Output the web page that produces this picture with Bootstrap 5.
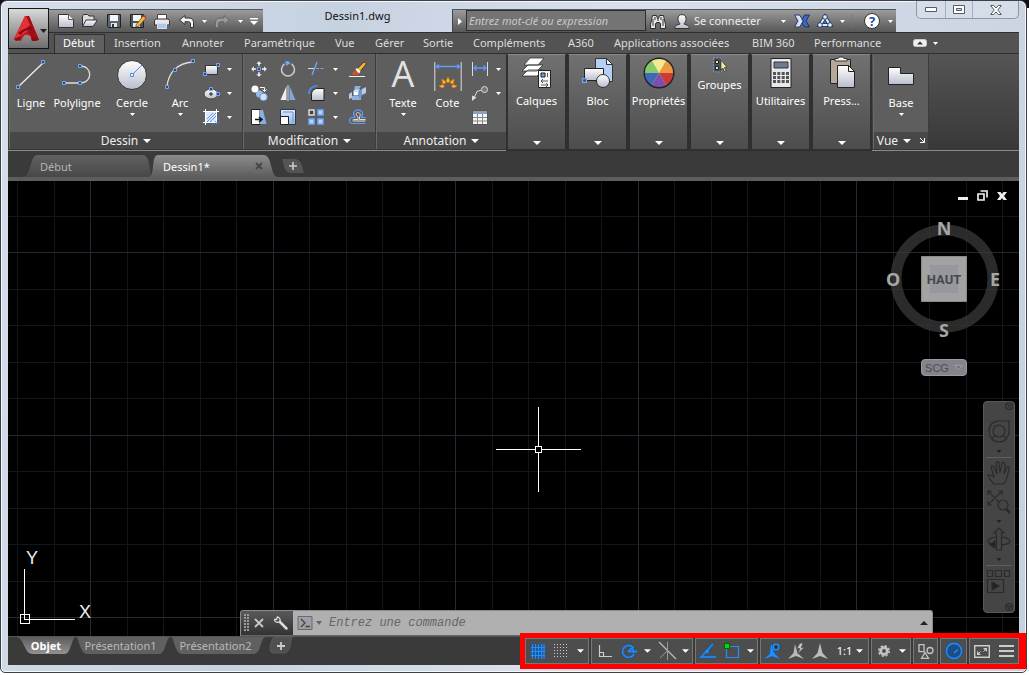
<!DOCTYPE html>
<html lang="fr">
<head>
<meta charset="utf-8">
<meta name="viewport" content="width=device-width, initial-scale=1">
<title>Dessin1.dwg</title>
<link rel="stylesheet" href="https://cdn.jsdelivr.net/npm/bootstrap@5.3.0/dist/css/bootstrap.min.css">
<style>
body{font:12px/16px "Noto Sans","Open Sans",sans-serif;background:#fff;color:#eee;overflow:hidden}
button,input,a{font:inherit;color:inherit;text-decoration:none}
button{background:none;border:0;padding:0;display:flex;align-items:center;justify-content:center;white-space:nowrap}
svg{display:block;flex:none;overflow:visible}
.desk{height:100vh;padding:0 2px 2px 0;background:linear-gradient(#111 8px,#fff 8px)}
.win{height:100%;border:1px solid #3c4148;border-radius:7px 7px 5px 5px;background:linear-gradient(100deg,#d5deea,#c7d2e1 30%,#d8e0ec 55%,#c6d1e0);padding:0 7px 7px;box-shadow:inset 0 0 0 1px #f4f7fb}
.ui{font-size:11px}
/* title bar */
.titlebar{height:31px;padding-left:41px}
.appbtn{left:0;top:7px;width:41px;height:41px;background:linear-gradient(#d9d9d9,#a8a8a8 45%,#6e6e6e);border:1px solid #151515;z-index:3}
.qat,.info{height:23px;background:linear-gradient(#9b9b9b,#6a6a6a 70%,#585858);border-top:1px solid #555;display:grid}
.qat{grid-template-columns:repeat(6,24px) 12px 24px 12px 16px;padding:0 0 0 5px;width:214px}
.info{grid-template-columns:13px 180px 24px 24px 82px 14px 24px 22px 12px 12px 24px 12px;width:444px;border-left:1px solid #444}
.doctitle{color:#111;padding-bottom:1px}
.searchbox{background:#747474;border:1px solid #2e2e2e;padding:0 2px;height:21px;width:100%;font-style:italic;border-radius:0}
.searchbox::placeholder,.cmdinput::placeholder{color:inherit;opacity:1}
.searchbox{color:#c8c8c8}
.sysbtns{margin-left:20px;width:103px;height:18px;border:1px solid #8d97a6;border-top:0;border-radius:0 0 5px 5px;display:grid;grid-template-columns:28px 27px 1fr;background:#d5dde8}
.sysbtns button+button{border-left:1px solid #a5aebb}
/* ribbon */
.rtabs{height:21px;background:#535353;border-top:1px solid #2f2f2f;display:grid;padding-left:46px;grid-template-columns:51px 68px 62px 91px 40px 48px 50px 95px 46px 138px 62px 105px 20px 10px;justify-content:start}
.rtabs a{padding-left:9px;line-height:19px;white-space:nowrap;color:#ddd}
.rtabs a.on{background:#606060;border:1px solid #2f2f2f;border-bottom:0;padding-left:8px;line-height:16px;margin-top:1px;color:#fff}
.panels{height:98px;background:linear-gradient(#555,#383838);border-top:1px solid #2f2f2f;border-bottom:1px solid #8a8a8a;padding:0 0 0 1px}
.pan{background:#5e5e5e;border-right:1px solid #3c3c3c;border-left:1px solid #696969;height:95px}
.pbody{height:78px}
.ptitle{height:17px;line-height:17px;background:#474747;font-size:12px;gap:5px}
.pd{width:234px}.pm{width:133px}.pa{width:131px}.pv{width:56px}
.slim{width:59px;margin-right:2px;height:96px;background:linear-gradient(#717171,#4d4d4d);border:1px solid #303030;border-top-color:#888;flex-direction:column;justify-content:flex-start;padding-top:2px;color:#fff;outline:1px solid #303030}
.slim .dn{margin-top:auto;margin-bottom:4px}
.tool{flex-direction:column;justify-content:flex-start;padding-top:5px;color:#fff}
.tool span,.slim span{line-height:16px}
.tool span{margin-top:4px}
.tool .dn{margin-top:2px}
.gd{display:grid;grid-template-columns:42px 50px 60px 36px 1fr}
.small-grid{display:grid;grid-auto-rows:24px;padding-top:3px;align-content:start}
.s2{grid-template-columns:26px 10px}
.s4{grid-template-columns:28px 29px 28px 10px 1fr;padding-left:1px}
.ga{display:grid;grid-template-columns:52px 37px 28px 8px}
/* drawing tabs */
.ftabs{height:30px;background:#3a3a3a;border-bottom:4px solid #5d5d5d;padding:4px 0 0 15px}
.ftab{height:22px;padding:0 17px;line-height:23px;position:relative;margin-right:-5px}
.ftab>svg.bg,.ltab>svg.bg{position:absolute;inset:0;width:100%;height:100%;z-index:0}
.ftab>*,.ltab>*{position:relative;z-index:1}
.ft1{width:130px;color:#b5b5b5}.ft2{width:130px;color:#fff;padding:0 15px}
/* canvas */
.canvas{background:#000;min-height:0}
.canvas>.full{position:absolute;inset:0;width:100%;height:100%}
.mdi{right:12px;top:9px;gap:9px}
.cube{right:15px;top:35px}
.scg{right:52px;top:178px;width:46px;height:17px;background:#84848c;border:1px solid #9a9aa2;border-radius:4px;color:#4c4c52;font:11px/14px "Liberation Sans",sans-serif;gap:5px}
.navbar2{right:4px;top:220px;width:32px;height:212px;background:#454545;border:1px solid #595959;border-radius:4px}
.ucs{left:9px;bottom:7px}
.cmd{left:232px;right:86px;bottom:0;height:26px;border-radius:3px 3px 0 0;background:#b0b0b0;border:1px solid #8b8b8b;border-bottom-color:#666}
.cmdleft{width:52px;background:linear-gradient(#595959,#333);display:grid;grid-template-columns:8px 20px 24px}
.cmdinput{border:0;background:none;font:italic 12px/16px "Liberation Mono",monospace;color:#666;padding:0 2px;outline:0;min-width:0}
/* status bar */
.foot{height:29px;background:#3a3a3a;border-top:1px solid #555}
.ltabs{padding-left:8px}
.ltab{height:17px;position:relative;margin-right:-6px;color:#b9b9b9;justify-content:center;line-height:17px}
.l1{width:60px;color:#fff;font-weight:700}.l2{width:101px}.l3{width:101px}.l4{width:26px}
.stat{gap:2px;margin-top:1px;height:26px}
.hl{position:absolute;inset:-5px -7px -5px -5px;border:5px solid #f00;border-right-width:7px;pointer-events:none}
.grp{display:grid;border:1px solid #777;background:#4d4d4d;height:26px}
.g1{grid-template-columns:24px 22px 16px}.g2{grid-template-columns:25px 23px 15px 24px 13px}.g3{grid-template-columns:23px 25px 13px}
.g4{grid-template-columns:23px 24px 24px 36px}.g5{grid-template-columns:23px 15px}.g6{grid-template-columns:23px}.g7{grid-template-columns:25px}.g8{grid-template-columns:24px 24px}
</style>
</head>
<body>
<svg width="0" height="0" class="position-absolute" aria-hidden="true">
<defs>
<linearGradient id="wg" x1="0" y1="0" x2="0" y2="1"><stop offset="0" stop-color="#fff"/><stop offset="1" stop-color="#b9bdcc"/></linearGradient>
<linearGradient id="bg1" x1="0" y1="0" x2="0" y2="1"><stop offset="0" stop-color="#e4efff"/><stop offset="1" stop-color="#8db4e4"/></linearGradient>
<linearGradient id="tg" x1="0" y1="0" x2="0" y2="1"><stop offset="0" stop-color="#616161"/><stop offset="1" stop-color="#484848"/></linearGradient>
<linearGradient id="ta" x1="0" y1="0" x2="0" y2="1"><stop offset="0" stop-color="#8c8c8c"/><stop offset="1" stop-color="#5d5d5d"/></linearGradient>
<linearGradient id="tb" x1="0" y1="0" x2="0" y2="1"><stop offset="0" stop-color="#5d5d5d"/><stop offset="1" stop-color="#929292"/></linearGradient>
<filter id="glow" x="-40%" y="-40%" width="180%" height="180%"><feDropShadow dx="0" dy="0" stdDeviation="1" flood-color="#0a5cd0"/></filter>
<symbol id="c5" viewBox="0 0 5 3"><path d="M0 0h5L2.500 3z" fill="#fff"/></symbol>
<symbol id="c8" viewBox="0 0 8 4"><path d="M0 0h8L4 4z" fill="#fff"/></symbol>
<symbol id="gp" viewBox="0 0 4 4"><path d="M.5.5h3v3h-3z" fill="#444" stroke="#6ea8ff"/></symbol>
</defs>
</svg>
<div class="desk">
<div class="win d-flex flex-column ui">

<header class="titlebar d-flex align-items-end position-relative">
  <button class="appbtn position-absolute" aria-label="Menu de l'application">
    <svg width="36" height="34" viewBox="0 0 36 34"><path d="M3 27 14 4h4l10 24-7 1-1-4c-3-3-6-3-8 0l-2 4z" fill="#c5161d"/><path d="M14 4h4l10 24-7 1-1-5-7-8z" fill="#a30f15"/><path d="M14 4 3 27l4-1 11-8 2-3-5-11z" fill="#e2313a"/><path d="M7 21c6-5 9-4 12-8l2 5c-5 0-8 0-11 5z" fill="#860a10"/><path d="M3 27l7-3-1 4-4 1zM28 27l-8-3 1 5 4 0z" fill="#8c0d12"/><path d="M29 17h7l-3.500 4z" fill="#222"/></svg>
  </button>
  <div class="qat">
    <button aria-label="Nouveau"><svg width="16" height="14" viewBox="0 0 16 14"><path d="M.5.5h10l5 5v8H.5z" fill="url(#wg)" stroke="#333"/><path d="M10.500.5v5h5" fill="#eee" stroke="#555"/></svg></button>
    <button aria-label="Ouvrir"><svg width="16" height="14" viewBox="0 0 16 14"><path d="M.5 12.500V2l1-1.500h4L7 2h5v3" fill="#ddd" stroke="#333"/><path d="M.5 12.500 4 6h11.500L11 12.500z" fill="url(#wg)" stroke="#333"/></svg></button>
    <button aria-label="Enregistrer"><svg width="14" height="14" viewBox="0 0 14 14"><path d="M.5.5h13v13h-12l-1-1z" fill="#5b6470" stroke="#222"/><path d="M3 1h8v6H3z" fill="#f2f5fa"/><path d="M4 9h6v4H4z" fill="#dfe5ee"/><path d="M5 10h2v3H5z" fill="#333"/></svg></button>
    <button aria-label="Enregistrer sous"><svg width="16" height="14" viewBox="0 0 16 14"><path d="M.5.5h13v13h-12l-1-1z" fill="#4c535d" stroke="#222"/><path d="M3 1h8v6H3z" fill="#f2f5fa"/><path d="M3 9h7v4H3z" fill="#dfe5ee"/><path d="M6 11 13 2l3 2-7 8-3 1z" fill="#f2b63c" stroke="#6b4510" stroke-width=".7"/><path d="m13 2 1-1 2 1v2z" fill="#d33"/></svg></button>
    <button aria-label="Imprimer"><svg width="16" height="15" viewBox="0 0 16 15"><path d="M3.500.5h9V6h-9z" fill="#fff" stroke="#444"/><path d="M.5 6.500 2 5h12l1.500 1.500V11H.5z" fill="#e8e8ec" stroke="#333"/><path d="M3.500 9.500h9v5h-9z" fill="#a9c9ee" stroke="#ddd"/></svg></button>
    <button aria-label="Annuler"><svg width="15" height="13" viewBox="0 0 15 13"><path d="M.5 5 6 .5V3h4c3 0 4.500 2 4.500 4.500v5h-3V9c0-1.500-.8-2.300-2-2.300H6V9.500z" fill="#f0f2f5" stroke="#333"/></svg></button>
    <button aria-label="Liste annuler"><svg width="5" height="3"><use href="#c5"/></svg></button>
    <button aria-label="Rétablir"><svg width="15" height="13" viewBox="0 0 15 13"><path d="M14.500 5 9 .5V3H5C2 3 .5 5 .5 7.500v5h3V9c0-1.500.8-2.300 2-2.300H9V9.500z" fill="#999" stroke="#666"/></svg></button>
    <button aria-label="Liste rétablir"><svg width="5" height="3"><use href="#c5"/></svg></button>
    <button aria-label="Personnaliser"><svg width="8" height="7" viewBox="0 0 8 7"><path d="M0 0h8v1.500H0zM0 3h8L4 7z" fill="#fff"/></svg></button>
  </div>
  <div class="doctitle flex-grow-1 text-center align-self-center">Dessin1.dwg</div>
  <div class="info">
    <button aria-label="Réduire"><svg width="4" height="7" viewBox="0 0 4 7"><path d="M0 0l4 3.500L0 7z" fill="#fff"/></svg></button>
    <input class="searchbox" aria-label="Recherche" placeholder="Entrez mot-clé ou expression">
    <button aria-label="Rechercher"><svg width="16" height="15" viewBox="0 0 16 15"><path d="M2.500 1.500h4l1 3h1l1-3h4l2 9v4h-5v-5h-1v-1h-3v1h-1v5h-5v-4z" fill="#e4e6ea" stroke="#2c2c2c"/><path d="M3 5v7M5 3v3M11 3v3M13 5v7M7 6h2" stroke="#333"/></svg></button>
    <button aria-label="Compte"><svg width="16" height="15" viewBox="0 0 16 15"><path d="M.7 14.500c0-3 2-3.500 5-4.300v-1C4 8 4 6 4 4.500 4 2 5.500.6 8 .6S12 2 12 4.500C12 6 12 8 10.300 9.200v1c3 .8 5 1.300 5 4.300z" fill="url(#wg)" stroke="#333"/></svg></button>
    <button class="justify-content-start">Se connecter</button>
    <button aria-label="Options du compte"><svg width="5" height="3"><use href="#c5"/></svg></button>
    <button aria-label="Exchange"><svg width="16" height="14" viewBox="0 0 16 14"><path d="M.5 1h5l4 6-4 6h-5l3.500-6z" fill="#d8e2f2" stroke="#233a6a"/><path d="M15.500 1h-5L8 5.500 9.500 7 8 9l2.500 4h5L12 7z" fill="#3c69c0" stroke="#1c3468"/></svg></button>
    <button aria-label="A360"><svg width="16" height="14" viewBox="0 0 16 14"><path d="M8 3 3 11h10z" fill="none" stroke="#223f75" stroke-width="4"/><path d="M8 3 3 11h10z" fill="none" stroke="#e6ecf5" stroke-width="2"/><g fill="#e6ecf5" stroke="#223f75"><circle cx="8" cy="3" r="2.300"/><circle cx="3" cy="11" r="2.300"/><circle cx="13" cy="11" r="2.300"/></g></svg></button>
    <button aria-label="Options A360"><svg width="5" height="3"><use href="#c5"/></svg></button>
    <span class="border-end border-secondary opacity-75 me-2 my-1"></span>
    <button aria-label="Aide"><svg width="16" height="16" viewBox="0 0 16 16"><circle cx="8" cy="8" r="7.500" fill="#fff" stroke="#333"/><text x="8" y="12.500" text-anchor="middle" font-size="13" font-weight="700" fill="#1f49ae">?</text></svg></button>
    <button aria-label="Options d'aide"><svg width="5" height="3"><use href="#c5"/></svg></button>
  </div>
  <div class="sysbtns align-self-start">
    <button aria-label="Réduire la fenêtre"><svg width="12" height="5" viewBox="0 0 12 5"><path d="M.5.5h11v4H.5z" fill="#fff" stroke="#555b68"/></svg></button>
    <button aria-label="Agrandir"><svg width="12" height="9" viewBox="0 0 12 9"><path d="M.5.5h11v8H.5zM3.500 3.500h5v2h-5z" fill="#fff" stroke="#555b68" fill-rule="evenodd"/></svg></button>
    <button aria-label="Fermer"><svg width="12" height="10" viewBox="0 0 12 10"><path d="M.7.5h3L6 3 8.300.5h3L7.800 5l3.500 4.500h-3L6 7 3.700 9.500h-3L4.200 5z" fill="#fff" stroke="#555b68"/></svg></button>
  </div>
</header>

<nav class="rtabs">
  <a href="#" class="on">Début</a><a href="#">Insertion</a><a href="#">Annoter</a><a href="#">Paramétrique</a><a href="#">Vue</a><a href="#">Gérer</a><a href="#">Sortie</a><a href="#">Compléments</a><a href="#">A360</a><a href="#">Applications associées</a><a href="#">BIM 360</a><a href="#">Performance</a>
  <button aria-label="Réduire le ruban"><svg width="14" height="8" viewBox="0 0 14 8"><rect x=".5" y=".5" width="13" height="7" rx="2" fill="#eee" stroke="#ccc"/><path d="M4 5.500h6l-3-3z" fill="#333"/></svg></button>
  <button aria-label="Options du ruban"><svg width="5" height="3"><use href="#c5"/></svg></button>
</nav>

<section class="panels d-flex">
  <div class="pan pd">
    <div class="pbody gd">
      <button class="tool"><svg width="32" height="32" viewBox="0 0 32 32"><path d="M3 28 28 4" stroke="#eee" stroke-width="1.300"/><use href="#gp" x="1" y="26" width="4" height="4"/><use href="#gp" x="26" y="1" width="4" height="4"/></svg><span>Ligne</span></button>
      <button class="tool"><svg width="32" height="32" viewBox="0 0 32 32"><path d="M3 24h16c13 0 13-17 0-17" fill="none" stroke="#ddd" stroke-width="1.300"/><use href="#gp" x="1" y="22" width="4" height="4"/><use href="#gp" x="17" y="22" width="4" height="4"/><use href="#gp" x="17" y="5" width="4" height="4"/></svg><span>Polyligne</span></button>
      <button class="tool"><svg width="32" height="32" viewBox="0 0 32 32"><circle cx="16" cy="16" r="14.500" fill="url(#wg)" stroke="#333"/><path d="M16 16 26 6" stroke="#4a8af0"/><path d="M14.500 14.500h3v3h-3z" fill="#fff" stroke="#4a8af0"/></svg><span>Cercle</span><svg class="dn" width="5" height="3"><use href="#c5"/></svg></button>
      <button class="tool"><svg width="32" height="32" viewBox="0 0 32 32"><path d="M3 28C4 14 13 4 29 3" fill="none" stroke="#ddd" stroke-width="1.300"/><use href="#gp" x="1" y="26" width="4" height="4"/><use href="#gp" x="9" y="9" width="4" height="4"/><use href="#gp" x="27" y="0" width="4" height="4"/></svg><span>Arc</span><svg class="dn" width="5" height="3"><use href="#c5"/></svg></button>
      <div class="small-grid s2">
        <button aria-label="Rectangle"><svg width="17" height="13" viewBox="0 0 17 13"><path d="M2.500 2.500h12v9h-12z" fill="url(#wg)" stroke="#333"/><use href="#gp" x="0" y="9" width="4" height="4"/><use href="#gp" x="13" y="0" width="4" height="4"/></svg></button><button aria-label="Options rectangle"><svg width="5" height="3"><use href="#c5"/></svg></button>
        <button aria-label="Ellipse"><svg width="17" height="13" viewBox="0 0 17 13"><ellipse cx="8" cy="7" rx="7" ry="5" fill="url(#wg)" stroke="#444"/><path d="M6 7h4M8 5v4" stroke="#222"/><use href="#gp" x="6" y="0" width="4" height="4"/><use href="#gp" x="13" y="5" width="4" height="4"/></svg></button><button aria-label="Options ellipse"><svg width="5" height="3"><use href="#c5"/></svg></button>
        <button aria-label="Hachures"><svg width="17" height="17" viewBox="0 0 17 17"><path d="M3 3h11v11H3z" fill="#dbe8fc"/><path d="M4 10l6-6M4 13l9-9M7 13l6-6M8 17l9-9M12 17l5-5" stroke="#3f7fe8" stroke-width=".8"/><path d="M0 2.500h16M2.500 0v16M13.500 0v12M0 13.500h12" stroke="#fff"/></svg></button><button aria-label="Options hachures"><svg width="5" height="3"><use href="#c5"/></svg></button>
      </div>
    </div>
    <div class="ptitle d-flex align-items-center justify-content-center">Dessin <svg width="8" height="4"><use href="#c8"/></svg></div>
  </div>
  <div class="pan pm">
    <div class="pbody small-grid s4">
      <button aria-label="Déplacer"><svg width="16" height="16" viewBox="0 0 16 16"><path d="M8 0l3 3H9v2H7V3H5zM8 16l3-3H9v-2H7v2H5zM0 8l3-3v2h2v2H3v2zM16 8l-3-3v2h-2v2h2v2z" fill="#eee" stroke="#444" stroke-width=".3"/><path d="M6.500 6.500h3v3h-3z" fill="#444" stroke="#6ea8ff"/></svg></button>
      <button aria-label="Rotation"><svg width="16" height="16" viewBox="0 0 16 16"><path d="M4.500 3A6.500 6.500 0 1 0 11.500 3" fill="none" stroke="#ccc" stroke-width="1.500"/><path d="M5 1.500c2-1 4-.5 5 1" fill="none" stroke="#5a9bff" stroke-width="1.500"/><path d="M6 0l4 2.500L6 5z" fill="#6ea8ff"/></svg></button>
      <button aria-label="Ajuster"><svg width="16" height="14" viewBox="0 0 16 14"><path d="M9 0 4 13" stroke="#6ea8ff" stroke-width="1.300"/><path d="M0 6.500h6" stroke="#ddd"/><path d="M8 6.500h8" stroke="#6ea8ff" stroke-dasharray="3 1.500"/></svg></button><button aria-label="Options ajuster"><svg width="5" height="3"><use href="#c5"/></svg></button>
      <button aria-label="Effacer"><svg width="18" height="16" viewBox="0 0 18 16"><path d="M7 9 15 1l2.500 1.500L10 12z" fill="#f3b33a" stroke="#3a2610" stroke-width=".7"/><path d="M7 9l3 3-2 2H4L3 12z" fill="#d6512a"/><path d="M6.500 8.500l3.500 4 1.500-2-3.500-3.500z" fill="#fff"/><path d="M0 15.500h16" stroke="#eee"/></svg></button>
      <button aria-label="Copier"><svg width="17" height="16" viewBox="0 0 17 16"><circle cx="4" cy="4" r="3.500" fill="#fff"/><circle cx="8.500" cy="9" r="3.500" fill="#9fbce6"/><circle cx="12.500" cy="12" r="3.800" fill="#cfe0f8" stroke="#5d8fd6"/><path d="M9 2.500h4.500V6M11.500 4.500l2 2 2-2" fill="none" stroke="#fff"/></svg></button>
      <button aria-label="Miroir"><svg width="16" height="16" viewBox="0 0 16 16"><path d="M6.500 1v14H.5z" fill="#eee"/><path d="M9.500 1v14h6z" fill="#7fa8dc"/><path d="M8 0v16" stroke="#fff" stroke-width=".8"/></svg></button>
      <button aria-label="Raccord"><svg width="17" height="16" viewBox="0 0 17 16"><path d="M3.500 15.500V10c0-4 2-6.500 6.500-6.500h6v12z" fill="url(#wg)" stroke="#222"/><path d="M.7 9C1 4 4 1 9.500.8" fill="none" stroke="#4a90ff" stroke-width="1.600"/></svg></button><button aria-label="Options raccord"><svg width="5" height="3"><use href="#c5"/></svg></button>
      <button aria-label="Décomposer"><svg width="17" height="15" viewBox="0 0 17 15"><path d="M4 5l2-2h6L10 5v5H4z" fill="url(#bg1)" stroke="#456" stroke-width=".6"/><path d="M0 8l3-2v6l-3 1zM13 3l4-2v6l-4 2z" fill="#b6cdea"/><path d="M3 10h9v4H3zM6 0h6l-2 3H5z" fill="#8fb0d8"/><path d="M10 5l3-2v7l-3 3z" fill="#6f97cc"/><path d="M5 6h4v3H5z" fill="#fff"/></svg></button>
      <button aria-label="Etirer"><svg width="16" height="16" viewBox="0 0 16 16"><path d="M.5.5H9v15H.5z" fill="#fff" stroke="#222"/><path d="M9 1h3l3.500 14H9z" fill="#86aee0"/><path d="M4 10.500h6M8 8l3 2.500L8 13" stroke="#111" fill="none" stroke-width="1.500"/></svg></button>
      <button aria-label="Echelle"><svg width="16" height="16" viewBox="0 0 16 16"><path d="M.5.5h15v15H.5z" fill="url(#bg1)" stroke="#334"/><path d="M3 3h10v10" fill="none" stroke="#5d8fd6"/><path d="M.5 7.500h8v8h-8z" fill="#fff" stroke="#222"/></svg></button>
      <button aria-label="Réseau"><svg width="16" height="16" viewBox="0 0 16 16"><path d="M1 1h5v5H1z" fill="#444" stroke="#ddd" stroke-width="1.500"/><path d="M10 1h5v5h-5zM1 10h5v5H1zM10 10h5v5h-5z" fill="#bcd6ff" stroke="#6ea8ff" stroke-width="1.500"/></svg></button><button aria-label="Options réseau"><svg width="5" height="3"><use href="#c5"/></svg></button>
      <button aria-label="Décaler"><svg width="17" height="16" viewBox="0 0 17 16"><path d="M16.500 14.500h-13c-4 0-4-6 0-6H6C3 4 5 .8 9 .8S15 4 12.500 8.500h4" fill="none" stroke="#5d9bff" stroke-width="1.200"/><path d="M16.500 12h-12c-1 0-1-1.500 0-1.500H9V8C6.500 6 7 3.500 9 3.500s3 2.500 1.500 4.500v2.500h6" fill="none" stroke="#ddd"/></svg></button>
    </div>
    <div class="ptitle d-flex align-items-center justify-content-center">Modification <svg width="8" height="4"><use href="#c8"/></svg></div>
  </div>
  <div class="pan pa">
    <div class="pbody ga">
      <button class="tool"><svg width="30" height="32" viewBox="0 0 30 32"><text x="15" y="28" font-size="36" text-anchor="middle" fill="#e2e2e2" font-family="Open Sans,sans-serif">A</text></svg><span>Texte</span><svg class="dn" width="5" height="3"><use href="#c5"/></svg></button>
      <button class="tool"><svg width="28" height="32" viewBox="0 0 28 32"><path d="M.8 3v29M27.200 3v29" stroke="#ddd"/><path d="M2 7.500h24M5 5.500l-3 2 3 2M23 5.500l3 2-3 2" fill="none" stroke="#5d9bff" stroke-width="1.400"/><path d="M14 18l2 4-2 2-2-2zM8 20l3.500 2.500v2l-3 0zM20 20l-3.500 2.500v2l3 0zM5 27l4-1.500 1.500 2L8 29zM23 27l-4-1.500-1.500 2L20 29z" fill="#ffb528" stroke="#e0761a" stroke-width=".6"/></svg><span>Cote</span></button>
      <div class="small-grid">
        <button aria-label="Linéaire"><svg width="16" height="14" viewBox="0 0 16 14"><path d="M.5 0v14M15.500 0v14" stroke="#ddd"/><path d="M2 6h12M4.500 3.500 2 6l2.500 2.500M11.500 3.500 14 6l-2.500 2.500" fill="none" stroke="#5d9bff" stroke-width="1.300"/></svg></button>
        <button aria-label="Repère"><svg width="16" height="15" viewBox="0 0 16 15"><path d="M1.500 13 5 5.500 9.500 4" fill="none" stroke="#ddd"/><path d="M0 9.500V15l4.500-3.500z" fill="#ddd"/><circle cx="12.500" cy="3.500" r="3" fill="#777" stroke="#ddd"/></svg></button>
        <button aria-label="Tableau"><svg width="16" height="15" viewBox="0 0 16 15"><path d="M.5.5h15v14H.5z" fill="#f4f4f6" stroke="#555"/><path d="M1 1h14v3H1z" fill="#8aa0bd"/><path d="M1 7.500h14M1 11h14M5.500 4v10M10.500 4v10" stroke="#888"/></svg></button>
      </div>
      <div class="small-grid">
        <button aria-label="Options cote"><svg width="5" height="3"><use href="#c5"/></svg></button>
        <button aria-label="Options repère"><svg width="5" height="3"><use href="#c5"/></svg></button>
      </div>
    </div>
    <div class="ptitle d-flex align-items-center justify-content-center">Annotation <svg width="8" height="4"><use href="#c8"/></svg></div>
  </div>
  <button class="slim"><svg width="32" height="32" viewBox="0 0 32 32"><g fill="#fff" stroke="#333" stroke-width=".8"><path d="M1 19l6-6h15l-6 6zM1 14l6-6h15l-6 6zM3 8l6-7h14l-6 7z"/></g><path d="M17.500 13.500h12v17h-12z" fill="#f4f4f7" stroke="#222"/><path d="M20 16h4v4h-4z" fill="#6a9be8" stroke="#222"/><path d="M26.500 16v4M20 24h7M22 22l-2 2 2 2M20 28h7M25 26l2 2-2 2" stroke="#333" fill="none" stroke-width=".8"/></svg><span class="mt-1">Calques</span><svg class="dn" width="8" height="4"><use href="#c8"/></svg></button>
  <button class="slim"><svg width="32" height="32" viewBox="0 0 32 32"><path d="M13.500 1.500h11l6 6v17h-17z" fill="#b5d0f5" stroke="#333"/><path d="M24.500 1.500v6h6z" fill="#e8f1ff" stroke="#333"/><path d="M2.500 11.500h19v12h-19z" fill="url(#wg)" stroke="#222"/><circle cx="21" cy="24" r="6.500" fill="url(#wg)" stroke="#333"/><use href="#gp" x="0" y="21" width="5" height="5"/></svg><span class="mt-1">Bloc</span><svg class="dn" width="8" height="4"><use href="#c8"/></svg></button>
  <button class="slim"><svg width="32" height="32" viewBox="-16 -16 32 32"><circle r="15" fill="#f1e993"/><path d="M0 0-7.500-13A15 15 0 0 0-15 0z" fill="#86c96b"/><path d="M0 0H-15A15 15 0 0 0-7.500 13z" fill="#3f68b8"/><path d="M0 0-7.500 13A15 15 0 0 0 7.500 13z" fill="#7a4fae"/><path d="M0 0 7.500 13A15 15 0 0 0 15 0z" fill="#c93b36"/><path d="M0 0H15A15 15 0 0 0 7.500-13z" fill="#eb9a3f"/><circle r="14.800" fill="none" stroke="#222" stroke-width="1.400"/></svg><span class="mt-1">Propriétés</span><svg class="dn" width="8" height="4"><use href="#c8"/></svg></button>
  <button class="slim"><svg width="16" height="16" viewBox="0 0 16 16"><path d="M1.500.8h8v14h-8z" fill="#4a4f59" stroke="#6ea8ff" stroke-dasharray="1.500 1.500"/><path d="M3.500 3.500h3v3h-3zM3.500 9.500h3v3h-3z" fill="#f0e7a0" stroke="#222"/><path d="M9 3v10l2-2 1.500 4 1.500-.5L12.500 10.500H15z" fill="#f4eaa5" stroke="#333" stroke-width=".7"/></svg><span class="mt-1">Groupes</span><svg class="dn" width="8" height="4"><use href="#c8"/></svg></button>
  <button class="slim"><svg width="22" height="32" viewBox="0 0 22 32"><path d="M1 1.500h20v29H1z" fill="#e6e8ee" stroke="#222"/><path d="M4 5h14v6H4z" fill="#6d7a90" stroke="#333"/><g fill="#555"><path d="M3 15h3v3H3zM7.300 15h3v3h-3zM11.700 15h3v3h-3zM16 15h3v3h-3zM3 19h3v3H3zM7.300 19h3v3h-3zM11.700 19h3v3h-3zM16 19h3v3h-3zM3 23h3v3H3zM7.300 23h3v3h-3zM11.700 23h3v3h-3zM16 23h3v3h-3z"/></g></svg><span class="mt-1">Utilitaires</span><svg class="dn" width="8" height="4"><use href="#c8"/></svg></button>
  <button class="slim"><svg width="28" height="32" viewBox="0 0 28 32"><path d="M2.500 2.500h20v24h-20z" fill="#b5a897" stroke="#222"/><path d="M7 4V1.500h3L11 0h4l1 1.500h3V4z" fill="#f5f5f5" stroke="#333"/><path d="M9.500 8.500h11l6 6v16h-17z" fill="url(#wg)" stroke="#222"/><path d="M20.500 8.500v6h6z" fill="#fff" stroke="#222"/></svg><span class="mt-1">Press...</span><svg class="dn" width="8" height="4"><use href="#c8"/></svg></button>
  <div class="pan pv">
    <button class="pbody tool w-100"><svg width="32" height="32" viewBox="0 0 32 32"><path d="M3.500 8.500h12v6h13v11h-25z" fill="url(#wg)" stroke="#222"/></svg><span>Base</span><svg class="dn" width="5" height="3"><use href="#c5"/></svg></button>
    <div class="ptitle d-flex align-items-center justify-content-center">Vue <svg width="8" height="4"><use href="#c8"/></svg><svg class="ms-1" width="5" height="5" viewBox="0 0 5 5"><path d="M0 0l4 4M4.500 0v4.500H0" stroke="#fff" fill="none"/></svg></div>
  </div>
</section>

<nav class="ftabs d-flex">
  <a href="#" class="ftab ft1"><svg class="bg" viewBox="0 0 130 22" preserveAspectRatio="none"><path d="M0 22c8 0 7-22 14-22h106c8 0 6 22 10 22z" fill="url(#tg)"/></svg><span>Début</span></a>
  <a href="#" class="ftab ft2 d-flex justify-content-between"><svg class="bg" viewBox="0 0 127 22" preserveAspectRatio="none"><path d="M0 22c8 0 2-22 10-22h103c9 0 6 22 14 22z" fill="url(#ta)"/></svg><span class="ms-n1">Dessin1*</span><svg class="align-self-center" width="8" height="8" viewBox="0 0 8 8"><path d="M1 1l6 6M7 1 1 7" stroke="#444" stroke-width="1.800"/></svg></a>
  <button class="ms-2" aria-label="Nouvel onglet"><svg width="24" height="14" viewBox="0 0 24 14"><path d="M1 0h12c8 0 8 8 10 14H11C3 14 3 6 1 0z" fill="#555"/><path d="M8 7h8M12 3v8" stroke="#ccc" stroke-width="1.600"/></svg></button>
</nav>

<main class="canvas position-relative flex-grow-1 overflow-hidden">
  <svg class="full" aria-hidden="true"><g transform="translate(-8 -181)" fill="none" shape-rendering="crispEdges">
    <path stroke="#14151b" d="M17.500 0v3000M54.500 0v3000M127.500 0v3000M163.500 0v3000M200.500 0v3000M236.500 0v3000M309.500 0v3000M346.500 0v3000M382.500 0v3000M419.500 0v3000M492.500 0v3000M528.500 0v3000M565.500 0v3000M601.500 0v3000M674.500 0v3000M711.500 0v3000M747.500 0v3000M784.500 0v3000M820.500 0v3000M893.500 0v3000M929.500 0v3000M966.500 0v3000M1002.500 0v3000M0 216.500h4000M0 289.500h4000M0 325.500h4000M0 362.500h4000M0 398.500h4000M0 471.500h4000M0 508.500h4000M0 544.500h4000M0 581.500h4000"/>
    <path stroke="#272835" d="M90.500 0v3000M273.500 0v3000M455.500 0v3000M638.500 0v3000M856.500 0v3000M0 252.500h4000M0 435.500h4000M0 617.500h4000"/>
    <path stroke="#fff" d="M496 449.500h39M542 449.500h39M538.500 407v39M538.500 453v39M535.500 446.500h6v6h-6z"/></g></svg>
  <div class="mdi position-absolute d-flex">
    <button aria-label="Réduire le dessin"><svg width="10" height="10" viewBox="0 0 10 10"><path d="M0 6h10v3H0z" fill="#eee"/></svg></button>
    <button aria-label="Restaurer le dessin"><svg width="11" height="11" viewBox="0 0 11 11"><path d="M1 4h6v6H1zM3.500 1h6.500v6.500" fill="none" stroke="#eee" stroke-width="1.700"/></svg></button>
    <button aria-label="Fermer le dessin"><svg width="10" height="10" viewBox="0 0 10 10"><path d="M0 1h3.500L5 3l1.500-2H10L7 5l3 4H6.500L5 7 3.500 9H0l3-4z" fill="#eee"/></svg></button>
  </div>
  <svg class="cube position-absolute" width="119" height="126" viewBox="885 216 119 126"><circle cx="944.500" cy="278.500" r="48.500" fill="none" stroke="#3a3a3a" stroke-opacity=".75" stroke-width="11"/><path d="M921.500 256.500h45v45h-45z" fill="#a2a2a2" stroke="#8a8a8a"/><path d="M930 265h28v28h-28z" fill="#97989e"/><g text-anchor="middle" font-family="Noto Sans,sans-serif" font-weight="700" fill="#a6a6a6"><text x="944" y="235" font-size="18">N</text><text x="944" y="337" font-size="18">S</text><text x="893" y="286" font-size="18">O</text><text x="995" y="286" font-size="18">E</text><text x="944" y="284" font-size="13" font-family="Liberation Sans Narrow,Roboto,sans-serif" fill="#45474c">HAUT</text></g></svg>
  <button class="scg position-absolute">SCG <svg width="9" height="5" viewBox="0 0 9 5"><path d="M.5.5h8l-4 4z" fill="#777780" stroke="#a4a4aa" stroke-width=".8"/></svg></button>
  <div class="navbar2 position-absolute"><svg width="30" height="210" viewBox="984 402 30 210" fill="none" stroke="#2b2b2b" stroke-width="1.200">
    <circle cx="1009" cy="406" r="3.500"/><path d="M1007.500 404.500l3 3M1010.500 404.500l-3 3"/>
    <path d="M989 431c0-6 4-10 10-10h10v10c0 6-4 11-10 11s-10-5-10-11z"/><circle cx="999" cy="431" r="6"/><path d="M995 435l-3 4M1003 435l3 4"/><path d="M996.500 450h5l-2.500 3z" fill="#222" stroke="none"/><path d="M986 457.500h26M986 565.500h26" stroke="#5e5e5e"/>
    <path d="M994 484c-3-4-6-6-6-9 2-1 4 1 6 2l-3-10c1-2 2-1 3 0l3 7-1-11c1-2 3-1 3 0l1 10 2-10c1-1 3 0 3 1l-1 10 3-7c2-1 3 0 2 2-1 5-2 11-5 15z"/>
    <path d="M988 491l14 14M1002 491l-14 14M988 495v-4h4M998 491h4v4M988 501v4h4"/><circle cx="1003" cy="505" r="5" fill="#454545"/><path d="M1006 509l4 4" stroke-width="2.500"/><path d="M996.500 520h5l-2.500 3zM996.500 558h5l-2.500 3z" fill="#222" stroke="none"/>
    <ellipse cx="999" cy="541" rx="11" ry="4"/><path d="M996.500 550v-17h-2.500l5-5 5 5h-2.500v17z" fill="#454545"/><path d="M990 545l5-4v7z" fill="#222"/>
    <path d="M987.500 570.500h5v6h-5zM995.500 570.500h6v6h-6zM1004.500 570.500h5v6h-5zM987.500 579.500h16v13h-16z"/><path d="M992 582v8l7-4z" fill="#222"/><circle cx="1009" cy="607" r="3.500"/><path d="M1007 606h4l-2 3z"/></svg></div>
  <svg class="ucs position-absolute" width="80" height="80" viewBox="17 549 80 80"><path d="M24.500 569v50.500H75M20.500 614.500h9v9h-9z" fill="none" stroke="#fff" shape-rendering="crispEdges"/><g fill="#eee" font-family="Liberation Sans,sans-serif" text-anchor="middle"><text x="32" y="564" font-size="18">Y</text><text x="85" y="618" font-size="18">X</text></g></svg>
  <div class="cmd position-absolute d-flex">
    <div class="cmdleft">
      <svg class="align-self-center" width="8" height="18"><path d="M4 0v18M7 0v18" stroke="#999" stroke-width="2" stroke-dasharray="2 1"/></svg>
      <button aria-label="Fermer la ligne de commande"><svg width="10" height="10" viewBox="0 0 10 10"><path d="M1 1l8 8M9 1 1 9" stroke="#c9c9c9" stroke-width="1.800"/></svg></button>
      <button aria-label="Personnaliser la ligne"><svg width="14" height="14" viewBox="0 0 14 14"><path d="M5 5l7.500 7.500" stroke="#ddd" stroke-width="2.500" stroke-linecap="round"/><path d="M3.500.8l-1 2.500-2 0C.5 6 3 7 5 6S6.500 2 3.500.8z" fill="#555" stroke="#ddd" stroke-width="1.200"/></svg></button>
    </div>
    <button class="ms-1" aria-label="Commandes récentes"><svg width="26" height="16" viewBox="0 0 26 16"><path d="M1 1.500h14v13H1z" fill="#9c9fa5" stroke="#666a72"/><path d="M4 4l4 4-4 4M8.500 11.500H13" fill="none" stroke="#444" stroke-width="1.300"/><path d="M19 6h6l-3 4z" fill="#666"/></svg></button>
    <input class="cmdinput flex-grow-1 ms-1" aria-label="Commande" placeholder="Entrez une commande">
    <button class="me-1" aria-label="Historique"><svg width="8" height="4" viewBox="0 0 8 4"><path d="M0 4h8L4 0z" fill="#222"/></svg></button>
  </div>
</main>

<footer class="foot d-flex justify-content-between">
  <nav class="ltabs d-flex">
    <a href="#" class="ltab l1 d-flex"><svg class="bg" viewBox="0 0 64 17" preserveAspectRatio="none"><path d="M0 0h64c-5 0-5 17-12 17H18C8 17 9 0 0 0z" fill="url(#tb)"/></svg><span>Objet</span></a>
    <a href="#" class="ltab l2 d-flex"><svg class="bg" viewBox="0 0 98 17" preserveAspectRatio="none"><path d="M6 0h92c-6 0-4 17-12 17H17C9 17 9 0 6 0z" fill="#606060"/></svg><span>Présentation1</span></a>
    <a href="#" class="ltab l3 d-flex"><svg class="bg" viewBox="0 0 98 17" preserveAspectRatio="none"><path d="M6 0h92c-6 0-4 17-12 17H17C9 17 9 0 6 0z" fill="#606060"/></svg><span>Présentation2</span></a>
    <button class="ltab l4 ms-2" aria-label="Nouvelle présentation"><svg class="bg" viewBox="0 0 26 17" preserveAspectRatio="none"><path d="M6 0h19c-3 0-1 16-9 16H5C-1 16 4 0 6 0z" fill="#505050" stroke="#666" stroke-width=".6"/></svg><svg width="8" height="8" viewBox="0 0 8 8"><path d="M0 4h8M4 0v8" stroke="#ccc" stroke-width="1.800"/></svg></button>
  </nav>
  <div class="stat d-flex position-relative">
    <div class="grp g1">
      <button aria-label="Grille"><svg width="14" height="15" viewBox="0 0 14 15" filter="url(#glow)"><path d="M1.500 0v15M4.500 0v15M7.500 0v15M10.500 0v15M13 0v15M0 3.500h14M0 7.500h14M0 11.500h14" stroke="#1e90ff"/></svg></button>
      <button aria-label="Résolution"><svg width="14" height="14" viewBox="0 0 14 14"><path d="M0 .5h14M0 3.500h14M0 6.500h14M0 9.500h14M0 12.500h14" stroke="#ccc" stroke-dasharray="1 2"/></svg></button>
      <button aria-label="Options résolution"><svg width="7" height="4"><use href="#c8"/></svg></button>
    </div>
    <div class="grp g2">
      <button aria-label="Ortho"><svg width="14" height="13" viewBox="0 0 14 13"><path d="M1.500 0v11.500H14M1.500 7.500h4v4" fill="none" stroke="#ccc" stroke-width="1.200"/></svg></button>
      <button aria-label="Repérage polaire"><svg width="16" height="15" viewBox="0 0 16 15" filter="url(#glow)"><path d="M13 10A6 6 0 1 1 12.500 4M7 7.500h9M7 7.500l5-4.500M11 4c1 1 1.500 2 1.500 5" fill="none" stroke="#1e90ff" stroke-width="1.300"/></svg></button>
      <button aria-label="Options polaire"><svg width="7" height="4"><use href="#c8"/></svg></button>
      <button aria-label="Isométrique"><svg width="17" height="18" viewBox="0 0 17 18"><path d="M0 0l17 17" stroke="#bbb" stroke-width="1.200"/><path d="M8.500 0v18M8.500 8.500 1 16" stroke="#999"/></svg></button>
      <button aria-label="Options isométrique"><svg width="7" height="4"><use href="#c8"/></svg></button>
    </div>
    <div class="grp g3">
      <button aria-label="Repérage"><svg width="16" height="14" viewBox="0 0 16 14" filter="url(#glow)"><path d="M13 0 1 13h15" fill="none" stroke="#1e90ff" stroke-width="1.300"/><path d="M5.500 6h3v3h-3z" fill="#1e90ff"/></svg></button>
      <button aria-label="Accrochage"><svg width="16" height="16" viewBox="0 0 16 16"><path d="M2.500 3.500h12v11h-12z" fill="none" stroke="#1e90ff" stroke-width="1.200"/><path d="M.5.5h5v5h-5z" fill="#0d0" stroke="#061"/></svg></button>
      <button aria-label="Options accrochage"><svg width="7" height="4"><use href="#c8"/></svg></button>
    </div>
    <div class="grp g4">
      <button aria-label="Visibilité des annotations"><svg width="17" height="17" viewBox="0 0 17 17" filter="url(#glow)"><path d="M7 1l3 9 6 6-8-3-8 3 6-5z" fill="#1e90ff"/><circle cx="12" cy="4" r="2.700" fill="#333" stroke="#1e90ff" stroke-width="1.500"/></svg></button>
      <button aria-label="Echelle automatique"><svg width="17" height="17" viewBox="0 0 17 17"><path d="M7 1l2.500 9L16 16l-8-3-8 3 5.500-6z" fill="#b8b8b8"/><path d="M12 0 9 5.500h3l-2 5 6-6h-3l2-4z" fill="#c8c8c8" stroke="#4d4d4d" stroke-width=".6"/></svg></button>
      <button aria-label="Annotations"><svg width="16" height="17" viewBox="0 0 16 17"><path d="M8 0l2.500 10L16 16l-8-3-8 3 5.500-6z" fill="#bdbdbd"/></svg></button>
      <button class="gap-1 text-white">1:1<svg width="7" height="4"><use href="#c8"/></svg></button>
    </div>
    <div class="grp g5">
      <button aria-label="Espace de travail"><svg width="12" height="12" viewBox="-6 -6 12 12"><circle r="3.300" fill="none" stroke="#c4c4c4" stroke-width="2.700"/><circle r="5.200" fill="none" stroke="#c4c4c4" stroke-width="1.600" stroke-dasharray="2.300 1.784"/></svg></button>
      <button aria-label="Options espace"><svg width="7" height="4"><use href="#c8"/></svg></button>
    </div>
    <div class="grp g6"><button aria-label="Isoler"><svg width="16" height="15" viewBox="0 0 16 15"><path d="M1 .7h5v7H1zM7 8.500l3.500 5.800h-7z" fill="none" stroke="#c4c4c4" stroke-width="1.300"/><circle cx="12" cy="6.500" r="3" fill="none" stroke="#c4c4c4" stroke-width="1.300"/></svg></button></div>
    <div class="grp g7"><button aria-label="Accélération"><svg width="18" height="18" viewBox="0 0 18 18" filter="url(#glow)"><circle cx="9" cy="9" r="7.500" fill="#1a4d85" stroke="#1e90ff" stroke-width="1.300"/><path d="M9 11l4-3.500" stroke="#1e90ff" stroke-width="1.600"/></svg></button></div>
    <div class="grp g8">
      <button aria-label="Plein écran"><svg width="16" height="13" viewBox="0 0 16 13"><path d="M.7.7h14.600v11.600H.7z" fill="none" stroke="#ccc" stroke-width="1.400"/><path d="M9 3h4v4zM3 6v4h4z" fill="#ccc"/><path d="M12 4 9.500 6.500M4 9l2.500-2.500" stroke="#ccc"/></svg></button>
      <button aria-label="Personnalisation"><svg width="15" height="12" viewBox="0 0 15 12"><path d="M0 1h15M0 6h15M0 11h15" stroke="#ccc" stroke-width="1.800"/></svg></button>
    </div>
    <div class="hl"></div>
  </div>
</footer>
</div>
</div>
<script src="https://cdn.jsdelivr.net/npm/bootstrap@5.3.0/dist/js/bootstrap.bundle.min.js"></script>
</body>
</html>
